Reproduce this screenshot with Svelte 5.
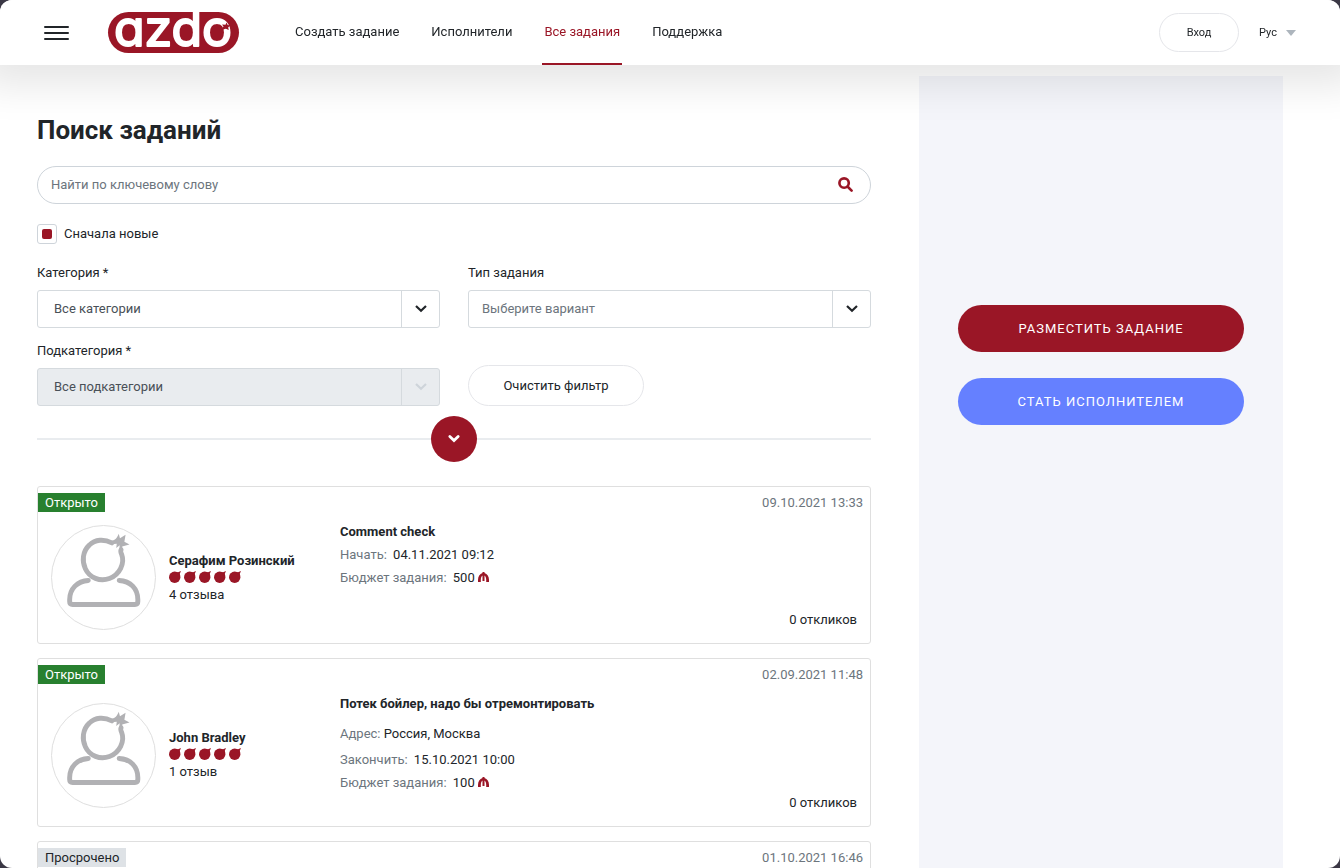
<script lang="ts">
  type Row = { label: string; value: string; kind?: 'address' | 'budget' };
  type Task = {
    status: string;
    open: boolean;
    created: string;
    author: string;
    reviews: string;
    title: string;
    rows: Row[];
    responses: string;
  };

  const nav = [
    { label: 'Создать задание', href: '#create' },
    { label: 'Исполнители', href: '#performers' },
    { label: 'Все задания', href: '#tasks', active: true },
    { label: 'Поддержка', href: '#support' }
  ];

  const tasks: Task[] = [
    {
      status: 'Открыто',
      open: true,
      created: '09.10.2021 13:33',
      author: 'Серафим Розинский',
      reviews: '4 отзыва',
      title: 'Comment check',
      rows: [
        { label: 'Начать:', value: '04.11.2021 09:12' },
        { label: 'Бюджет задания:', value: '500', kind: 'budget' }
      ],
      responses: '0 откликов'
    },
    {
      status: 'Открыто',
      open: true,
      created: '02.09.2021 11:48',
      author: 'John Bradley',
      reviews: '1 отзыв',
      title: 'Потек бойлер, надо бы отремонтировать',
      rows: [
        { label: 'Адрес:', value: 'Россия, Москва', kind: 'address' },
        { label: 'Закончить:', value: '15.10.2021 10:00' },
        { label: 'Бюджет задания:', value: '100', kind: 'budget' }
      ],
      responses: '0 откликов'
    },
    {
      status: 'Просрочено',
      open: false,
      created: '01.10.2021 16:46',
      author: '',
      reviews: '',
      title: '',
      rows: [],
      responses: ''
    }
  ];

  let query = $state('');
  let newestFirst = $state(true);
  let taskType = $state('');

  function clearFilter() {
    query = '';
    taskType = '';
  }
</script>

{#snippet chevron()}
  <svg class="chevron" viewBox="0 0 12 8" aria-hidden="true">
    <path d="M1 1 6 5.800l5-4.800" />
  </svg>
{/snippet}

<div class="shell">
  <header class="topbar">
    <button type="button" class="burger" aria-label="Меню">
      <span></span><span></span><span></span>
    </button>

    <a class="logo" href="#home" aria-label="azdo">
      <svg viewBox="0 0 131 41">
        <rect width="131" height="41" rx="20.5" fill="#9a1626" />
        <text x="65" y="34" text-anchor="middle">azdo</text>
        <path d="M113 18l2.500-3.500-1.500-2 3.500.300 1-2.300 1.200 2.500 2.800.500-2.300 1.700.500 2.800-2.800-1.200z" fill="#9a1626" />
      </svg>
    </a>

    <nav>
      {#each nav as item}
        <a href={item.href} class:active={item.active}>{item.label}</a>
      {/each}
    </nav>

    <button type="button" class="login">Вход</button>
    <div class="lang">
      <select aria-label="Язык">
        <option>Рус</option>
      </select>
      <svg viewBox="0 0 10 6" aria-hidden="true"><path d="M0 0h10L5 6z" fill="#adb5bd" /></svg>
    </div>
  </header>

  <div class="layout">
    <main>
      <h1>Поиск заданий</h1>

      <div class="search">
        <input type="search" aria-label="Поиск" placeholder="Найти по ключевому слову" bind:value={query} />
        <button type="button" aria-label="Искать">
          <svg viewBox="0 0 16 16" aria-hidden="true">
            <circle cx="6.500" cy="6.500" r="5" />
            <path d="M10.400 10.400l4.100 4.100" />
          </svg>
        </button>
      </div>

      <label class="check">
        <input type="checkbox" bind:checked={newestFirst} />
        Сначала новые
      </label>

      <div class="filters">
        <div class="field">
          <label for="category">Категория *</label>
          <div class="select">
            <select id="category"><option>Все категории</option></select>
            <span class="arrow">{@render chevron()}</span>
          </div>
        </div>
        <div class="field">
          <label for="type">Тип задания</label>
          <div class="select empty">
            <select id="type" bind:value={taskType}><option value="">Выберите вариант</option></select>
            <span class="arrow">{@render chevron()}</span>
          </div>
        </div>
        <div class="field">
          <label for="subcategory">Подкатегория *</label>
          <div class="select disabled">
            <select id="subcategory" disabled><option>Все подкатегории</option></select>
            <span class="arrow">{@render chevron()}</span>
          </div>
        </div>
        <button type="button" class="clear" onclick={clearFilter}>Очистить фильтр</button>
      </div>

      <div class="divider">
        <button type="button" aria-label="Показать больше фильтров">{@render chevron()}</button>
      </div>

      <div class="tasks">
        {#each tasks as task}
          <article class="task">
            <div class="task-head">
              <span class="badge" class:open={task.open}>{task.status}</span>
              <time>{task.created}</time>
            </div>
            <div class="task-body">
              <div class="author">
                <div class="avatar">
                  <svg viewBox="0 0 105 105" aria-hidden="true">
                    <path d="M61 17.200C53 13 44 13.500 38 19.500C31 26 30.500 36 34 43.500C38.500 53 49 57 58.500 53.500C69 49.500 74.500 38 71 29C70 26.500 69.800 25.500 70.300 24.500" />
                    <path d="M37 55.500C26 56 18 64 18 75V77Q18 80 21 80H84.500Q87.500 80 87.500 77V75C87.500 64 80 56 68.500 55.500" />
                    <path
                      class="crown"
                      d="M60.500 18.500L61 15C64 15 66.500 12 68 8L69.300 12.500L75 9L73.800 16L79 18.800L71.500 21L72.500 25L68.500 24.500L69 19.500L65.500 22.500L66 18Z"
                    />
                  </svg>
                </div>
                <div class="author-text">
                  <strong>{task.author}</strong>
                  <div class="rating" role="img" aria-label="5 из 5">
                    {#each Array(5) as _}
                      <svg viewBox="0 0 12 12">
                        <circle cx="5.700" cy="6.300" r="5.700" />
                        <path d="M6.500 1 9 1.300 12 0 10.800 2.800 11.300 5.500Z" />
                      </svg>
                    {/each}
                  </div>
                  <span>{task.reviews}</span>
                </div>
              </div>
              <div class="info">
                <h2>{task.title}</h2>
                {#each task.rows as row}
                  <p class={row.kind}>
                    <span>{row.label}</span>
                    {row.value}
                    {#if row.kind === 'budget'}
                      <svg viewBox="0 0 11 10" role="img" aria-label="манат">
                        <path
                          d="M4.500 0H6.500V1C9.300 1.800 11 4.500 11 8V10H8.200V8C8.200 5.800 7.600 4.200 6.500 3.400V9H4.500V3.400C3.400 4.200 2.800 5.800 2.800 8V10H0V8C0 4.500 1.700 1.800 4.500 1Z"
                        />
                      </svg>
                    {/if}
                  </p>
                {/each}
              </div>
              <span class="responses">{task.responses}</span>
            </div>
          </article>
        {/each}
      </div>
    </main>

    <aside>
      <button type="button" class="cta">Разместить задание</button>
      <button type="button" class="cta blue">Стать исполнителем</button>
    </aside>
  </div>
</div>

<style>
  :global(body) {
    background: #3b3845;
  }

  .shell {
    height: 100vh;
    overflow: auto;
    scrollbar-width: none;
    border-radius: 12px;
    background: #fff;
    color: #212529;
    font: 13px/22px Roboto, sans-serif;
  }

  .shell *,
  .shell {
    box-sizing: border-box;
  }

  button,
  input,
  select {
    margin: 0;
    font: inherit;
    color: inherit;
  }

  button {
    padding: 0;
    border: 0;
    background: none;
    cursor: pointer;
  }

  .topbar {
    position: sticky;
    top: 0;
    z-index: 10;
    display: flex;
    align-items: center;
    height: 65px;
    padding: 0 44px;
    background: #fff;
    box-shadow: 0 0 40px 20px rgba(0, 0, 0, 0.1);
  }

  .burger {
    display: grid;
    gap: 4px;
    width: 25px;
    margin-right: 39px;
  }

  .burger span {
    height: 2px;
    border-radius: 1px;
    background: #212529;
  }

  .logo svg {
    display: block;
    width: 131px;
    height: 41px;
    overflow: visible;
  }

  .logo text {
    fill: #fff;
    stroke: #fff;
    stroke-width: 2px;
    stroke-linejoin: round;
    font: 400 50px Inter, sans-serif;
    font-feature-settings: 'cv11';
  }

  nav {
    display: flex;
    align-self: stretch;
    gap: 28px;
    margin: 0 auto 0 54px;
  }

  nav a {
    display: flex;
    align-items: center;
    padding: 0 2px;
    border-bottom: 2px solid transparent;
    color: #212529;
    text-decoration: none;
  }

  nav a.active {
    border-color: #9a1626;
    color: #9a1626;
  }

  .login {
    width: 80px;
    height: 39px;
    margin-right: 20px;
    border: 1px solid #e5e6ea;
    border-radius: 20px;
    font-size: 11px;
  }

  .lang {
    display: flex;
    align-items: center;
    gap: 9px;
    font-size: 11px;
  }

  .lang select {
    appearance: none;
    padding: 0;
    border: 0;
    background: none;
  }

  .lang svg {
    width: 10px;
    height: 6px;
  }

  .layout {
    display: grid;
    grid-template-columns: minmax(0, 1fr) 364px;
    gap: 48px;
    padding: 11px 57px 0 37px;
  }

  main {
    padding-top: 38px;
  }

  h1 {
    margin: 0 0 20px;
    font-size: 26px;
    line-height: 32px;
    font-weight: 700;
  }

  .search {
    display: flex;
    align-items: center;
    height: 38px;
    padding: 0 17px 0 13px;
    border: 1px solid #ced4da;
    border-radius: 20px;
  }

  .search input {
    flex: 1;
    padding: 0;
    border: 0;
    outline: 0;
    background: none;
  }

  .search input::placeholder {
    color: #6c757d;
    opacity: 1;
  }

  .search button {
    padding-bottom: 2px;
  }

  .search svg {
    display: block;
    width: 15px;
    height: 15px;
    fill: none;
    stroke: #9a1626;
    stroke-width: 2.8;
    stroke-linecap: round;
  }

  .check {
    display: flex;
    align-items: center;
    gap: 7px;
    width: max-content;
    margin-top: 19px;
  }

  .check input {
    appearance: none;
    display: grid;
    place-items: center;
    width: 20px;
    height: 20px;
    border: 1px solid #ced4da;
    border-radius: 3px;
  }

  .check input:checked::before {
    content: '';
    width: 10px;
    height: 10px;
    border-radius: 2px;
    background: #9a1626;
  }

  .filters {
    display: grid;
    grid-template-columns: 1fr 1fr;
    align-items: end;
    gap: 12px 28px;
    margin-top: 17px;
  }

  .field label {
    display: block;
    margin-bottom: 6px;
  }

  .select {
    display: flex;
    height: 38px;
    border: 1px solid #d5dade;
    border-radius: 3px;
    color: #495057;
  }

  .select select {
    appearance: none;
    flex: 1;
    min-width: 0;
    padding: 0 16px;
    border: 0;
    background: none;
    opacity: 1;
  }

  .select.empty {
    color: #6c757d;
  }

  .select.empty select {
    padding: 0 13px;
  }

  .arrow {
    display: grid;
    place-items: center;
    width: 38px;
    border-left: 1px solid #d5dade;
    color: #212529;
  }

  .select.disabled {
    background: #e9ecef;
  }

  .select.disabled .arrow {
    color: #ced4da;
  }

  .chevron {
    width: 12px;
    height: 8px;
    overflow: visible;
    fill: none;
    stroke: currentColor;
    stroke-width: 2.2;
  }

  .clear {
    width: 176px;
    height: 41px;
    border: 1px solid #e5e6ea;
    border-radius: 21px;
  }

  .divider {
    display: flex;
    align-items: center;
    justify-content: center;
    margin-top: 10px;
  }

  .divider::before,
  .divider::after {
    content: '';
    flex: 1;
    border-top: 2px solid #e9ecef;
  }

  .divider button {
    display: grid;
    place-items: center;
    width: 46px;
    height: 46px;
    border-radius: 50%;
    background: #9a1626;
    color: #fff;
  }

  .divider .chevron {
    padding: 0 1px;
    stroke-width: 3.4;
    stroke-linecap: round;
  }

  .tasks {
    display: grid;
    gap: 14px;
    margin-top: 24px;
  }

  .task {
    padding: 6px 0 9px;
    border: 1px solid #dfdfdf;
    border-radius: 3px;
  }

  .task-head {
    display: flex;
    justify-content: space-between;
    align-items: center;
    height: 19px;
    padding-right: 7px;
  }

  .badge {
    padding: 0 7px;
    background: #dee2e6;
    line-height: 19px;
  }

  .badge.open {
    background: #28802f;
    color: #fff;
  }

  time {
    color: #6c757d;
  }

  .task-body {
    display: flex;
    min-height: 113px;
    margin-top: 9px;
    padding: 0 13px;
  }

  .author {
    display: flex;
    align-items: center;
    gap: 13px;
    flex: 0 0 289px;
  }

  .avatar {
    width: 105px;
    height: 105px;
    border: 1px solid #dfdfdf;
    border-radius: 50%;
  }

  .avatar svg {
    display: block;
    fill: none;
    stroke: #b1b1b4;
    stroke-width: 5;
    stroke-linecap: round;
  }

  .avatar .crown {
    fill: #b1b1b4;
    stroke: none;
  }

  .author-text {
    display: grid;
    line-height: 20px;
  }

  .rating {
    display: flex;
    gap: 3px;
    margin-bottom: 2px;
  }

  .rating svg {
    width: 12px;
    height: 12px;
    fill: #9a1626;
  }

  .info {
    flex: 1;
    display: flex;
    flex-direction: column;
    gap: 1px;
    padding-bottom: 23px;
  }

  h2,
  p {
    margin: 0;
    font-size: 13px;
    line-height: 22px;
  }

  p span {
    margin-right: 3px;
    color: #6c757d;
  }

  .address {
    margin: 7px 0 3px;
  }

  .address span {
    margin-right: 0;
  }

  p svg {
    width: 11px;
    height: 10px;
    fill: #9a1626;
  }

  .responses {
    align-self: flex-end;
    padding-bottom: 3px;
  }

  aside {
    display: flex;
    flex-direction: column;
    gap: 26px;
    padding: 229px 39px 40px;
    background: #f4f5fa;
  }

  .cta {
    height: 47px;
    border-radius: 24px;
    background: #9a1626;
    color: #fff;
    letter-spacing: 1px;
    text-transform: uppercase;
  }

  .cta.blue {
    background: #6580ff;
  }
</style>
